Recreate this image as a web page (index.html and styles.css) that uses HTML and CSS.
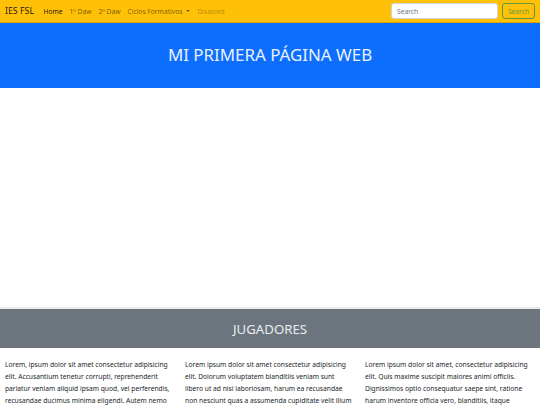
FILE: index.html
```html
<!DOCTYPE html>
<html lang="es">
<head>
    <meta charset="UTF-8">
    <meta name="viewport" content="width=device-width, initial-scale=1.0">
    <title>Mi primera página web</title>
    <link rel="stylesheet" href="styles.css">
</head>
<body>
    <nav class="navbar">
        <a class="brand" href="#">IES FSL</a>
        <ul class="nav-links">
            <li><a class="active" href="#">Home</a></li>
            <li><a href="#">1º Daw</a></li>
            <li><a href="#">2º Daw</a></li>
            <li><a class="dropdown" href="#">Ciclos Formativos</a></li>
            <li><a class="disabled">Disabled</a></li>
        </ul>
        <form class="search">
            <input type="search" placeholder="Search">
            <button type="button">Search</button>
        </form>
    </nav>

    <header class="hero">
        <h1>MI PRIMERA PÁGINA WEB</h1>
    </header>

    <div class="banner"></div>

    <section class="players">
        <h2>JUGADORES</h2>
    </section>

    <div class="row">
        <p class="col">Lorem, ipsum dolor sit amet consectetur adipisicing elit. Accusantium tenetur corrupti, reprehenderit pariatur veniam aliquid ipsam quod, vel perferendis, recusandae ducimus minima eligendi. Autem nemo mollitia ratione doloremque, vitae sunt.</p>
        <p class="col">Lorem ipsum dolor sit amet consectetur adipisicing elit. Dolorum voluptatem blanditiis veniam sunt libero ut ad nisi laboriosam, harum ea recusandae non nesciunt quas a assumenda cupiditate velit illum vero.</p>
        <p class="col">Lorem ipsum dolor sit amet, consectetur adipisicing elit. Quis maxime suscipit maiores animi officiis. Dignissimos optio consequatur saepe sint, ratione harum inventore officia vero, blanditiis, itaque cupiditate? Reprehenderit, sint dolorum.</p>
    </div>
</body>
</html>
```

FILE: styles.css
```css
* {
    margin: 0;
    padding: 0;
    box-sizing: border-box;
}

body {
    font-family: "Noto Sans", "Open Sans", sans-serif;
    color: #212529;
    background: #fff;
}

.navbar {
    background: #ffc107;
    height: 23px;
    display: flex;
    align-items: center;
    padding: 0 5px;
    border-bottom: 1px solid #d9a406;
}

.brand {
    font-size: 8.8px;
    color: rgba(0, 0, 0, 0.9);
    text-decoration: none;
    margin-right: 6px;
}

.nav-links {
    list-style: none;
    display: flex;
    flex: 1;
}

.nav-links a {
    display: block;
    font-size: 6.7px;
    padding: 0 3.5px;
    color: rgba(0, 0, 0, 0.55);
    text-decoration: none;
}

.nav-links a.active {
    color: rgba(0, 0, 0, 0.9);
}

.nav-links a.disabled {
    color: rgba(0, 0, 0, 0.3);
}

.dropdown::after {
    content: "";
    display: inline-block;
    margin-left: 4px;
    vertical-align: 1.5px;
    border-top: 2.5px solid;
    border-left: 2.5px solid transparent;
    border-right: 2.5px solid transparent;
}

.search {
    display: flex;
    gap: 4px;
}

.search input {
    width: 107px;
    height: 16px;
    border: 1px solid #ced4da;
    border-radius: 3px;
    padding: 0 5px;
    font-family: inherit;
    font-size: 6.7px;
    background: #fff;
}

.search input::placeholder {
    color: #6c757d;
}

.search button {
    width: 33px;
    height: 16px;
    padding: 0;
    font-family: inherit;
    font-size: 6.7px;
    color: #198754;
    background: transparent;
    border: 1px solid #198754;
    border-radius: 3px;
    opacity: 0.7;
}

.hero {
    background: #0d6efd;
    height: 65px;
    display: flex;
    align-items: center;
    justify-content: center;
    padding-bottom: 3px;
}

.hero h1 {
    font-size: 16.9px;
    font-weight: 400;
    color: #e9f1ff;
}

.banner {
    height: 221px;
    border-bottom: 2px solid #e9ecef;
}

.players {
    background: #6c757d;
    height: 39px;
    display: flex;
    align-items: center;
    justify-content: center;
}

.players h2 {
    font-size: 13.2px;
    font-weight: 400;
    color: #e9ecef;
}

.row {
    display: grid;
    grid-template-columns: repeat(3, 1fr);
    padding: 11px 0 0;
}

.col {
    padding: 0 6px 0 5px;
    font-size: 6.7px;
    line-height: 12px;
}
```
